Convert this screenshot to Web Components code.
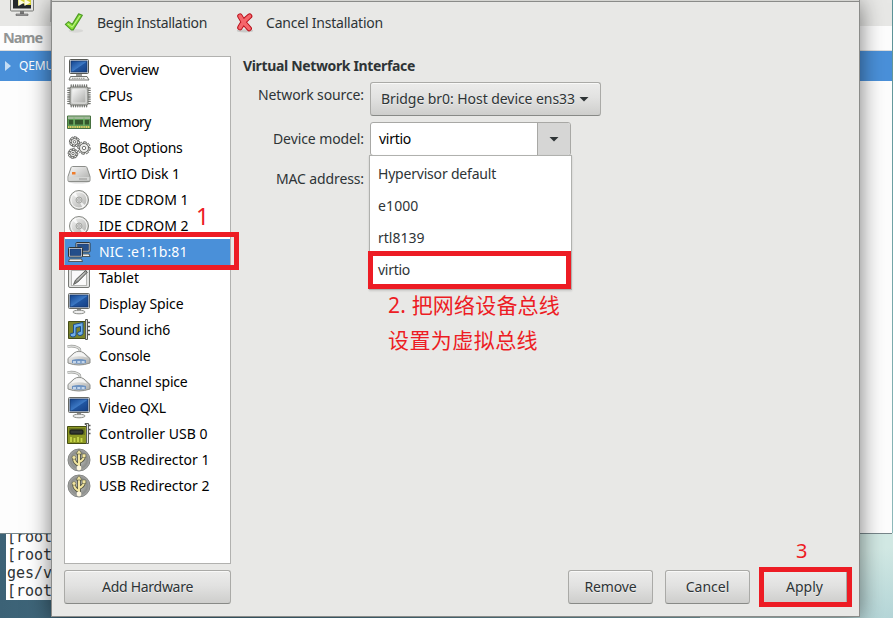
<!DOCTYPE html>
<html lang="en"><head><meta charset="utf-8"><title>Virtual Machine</title>
<style>html,body{margin:0;width:893px;height:618px;overflow:hidden;font:14px/20px "Noto Sans","Noto Sans CJK SC",sans-serif;color:#2e3436}</style></head><body>
<vm-desktop></vm-desktop>
<script>
const define=(name,html,after)=>customElements.define(name,class extends HTMLElement{
 constructor(){super();this.attachShadow({mode:'open'})}
 connectedCallback(){this.shadowRoot.innerHTML=typeof html==='function'?html(this):html;if(after)after(this)}
});
// One-line label tracked to an exact advance width.
define('ui-text',el=>`<style>:host{display:inline-block;white-space:pre;flex:none}span{display:inline-block}</style><span>${el.getAttribute('text')}</span>`,el=>{
 const w=+el.getAttribute('w'),s=el.shadowRoot.querySelector('span');
 if(w){const n=[...el.getAttribute('text')].length;const d=(w-s.getBoundingClientRect().width)/n;s.style.letterSpacing=d+'px';el.style.width=w+'px'}
});
const defs=`<defs>
<linearGradient id="b" x1="0" y1="0" x2="1" y2="1"><stop stop-color="#12438d"/><stop offset=".5" stop-color="#3c78c4"/><stop offset=".55" stop-color="#2055a0"/><stop offset="1" stop-color="#153f85"/></linearGradient>
<linearGradient id="g" x1="0" y1="0" x2="1" y2="1"><stop stop-color="#fafafa"/><stop offset="1" stop-color="#a9aaa7"/></linearGradient>
<radialGradient id="u"><stop stop-color="#c9cac8"/><stop offset=".75" stop-color="#8d8f8c"/><stop offset="1" stop-color="#aaa"/></radialGradient></defs>`;
const screen='<rect x="2.5" y="1.5" width="19" height="14" rx="1" fill="#e7e8e6" stroke="#555753"/><rect x="4" y="3" width="16" height="11" fill="url(#b)" stroke="#17396d" stroke-width=".8"/>';
const disc='<circle cx="12" cy="12" r="9.5" fill="url(#g)" stroke="#888a85"/><circle cx="12" cy="12" r="8" fill="none" stroke="#f5f5f4"/><path d="M12 12L5.5 6.5l3-2.4zM12 12l6.500 5.500-3 2.400z" fill="#fff" opacity=".75"/><circle cx="12" cy="12" r="3" fill="#d3d4d1" stroke="#a6a7a4"/><circle cx="12" cy="12" r="1.2" fill="#fff" stroke="#777" stroke-width=".6"/>';
const gear=(x,y,r)=>{let p='';for(let i=0;i<8;i++){p+=`<rect x="${x-1.3}" y="${y-r-1.7}" width="2.600" height="3" fill="#f3f3f2" stroke="#555753" stroke-width=".8" transform="rotate(${i*45+10} ${x} ${y})"/>`}return p+`<circle cx="${x}" cy="${y}" r="${r}" fill="#eeeeec" stroke="#555753" stroke-width=".8"/><circle cx="${x}" cy="${y}" r="${r*.38}" fill="#fff" stroke="#555753" stroke-width=".8"/>`};
let pins='';for(let i=0;i<8;i++){const p=3.9+i*2.2;pins+=`<path d="M${p+.3} .8v22M.8 ${p+.3}h22.400"/>`}
const pc='<rect x=".5" y=".5" width="14" height="9.500" rx=".8" fill="#e8e8e6" stroke="#2e3436"/><rect x="2" y="2" width="11" height="6.500" fill="#244e8a" stroke="#173566" stroke-width=".6"/><path d="M1.500 12h12l1 2.500H.5z" fill="#eeeeec" stroke="#3c3f3b" stroke-width=".8"/>';
const icons={
overview:screen+'<path d="M9 16h6v2H9z" fill="#999"/><path d="M3.500 18.500h16.500l2 3.500H2z" fill="#f2f2f1" stroke="#70726e"/><path d="M5 20.300h13" stroke="#8f918d" stroke-dasharray="1.500 .7"/>',
cpu:`<g stroke="#747672" stroke-width="1.300" stroke-linecap="round">${pins}</g><rect x="3" y="3" width="18" height="18" rx="1.500" fill="#c2c3c1" stroke="#73756f"/><rect x="5" y="5" width="14" height="14" rx="1" fill="url(#g)" stroke="#e3e4e2"/>`,
memory:'<path d="M.5 6h23v12.500H.5z" fill="#5c9b57" stroke="#47713f"/><path d="M1 6.500h22v2.500H1z" fill="#a3b99c"/><path d="M2 10h4.500v4.500H2zm6 0h8v4.500H8zm9.500 0h4.500v4.500h-4.500z" fill="#34562c"/><path d="M7 7.500v8m10-8v8" stroke="#79b86c"/><path d="M1 17h22" stroke="#dfcc62" stroke-width="2" stroke-dasharray="1.200 .6"/>',
boot:gear(7.5,5.800,3.300)+gear(17,12,4.500)+gear(6,17.500,3.100),
disk:'<ellipse cx="12" cy="19.500" rx="11" ry="2" fill="#0002"/><path d="M5.500 4.500h13q1 0 1.500 1.200l3 8.800v4q0 1-1 1H2q-1 0-1-1v-4l3-8.800q.5-1.200 1.500-1.200z" fill="url(#g)" stroke="#8c8e8a"/><path d="M1.500 15h21v3.500h-21z" fill="#d5d6d4"/><path d="M5 10h3.500v2.500H5z" fill="#ef7d2d"/><path d="M13 16v2m2-2v2m2-2v2m2-2v2" stroke="#858784" stroke-width=".8"/>',
disc,
nic:`<g transform="translate(8.500 2)">${pc}</g><g transform="translate(1 7)">${pc}</g>`,
tablet:'<rect x="1.500" y="2.500" width="21" height="19" rx="1.500" fill="#e2e3e1" stroke="#777975"/><rect x="4.500" y="4.500" width="15" height="15" fill="#fafafa" stroke="#b5b6b3"/><path d="M6.500 18.500l2-4.500L18.500 4.500l1.800 1.800-9.500 9.700z" fill="#8d8f8b" stroke="#555753" stroke-width=".9"/><path d="M10 14.500l8-8" stroke="#dfdfdc"/>',
display:'<path d="M10 15h4v4h-4z" fill="#888"/><ellipse cx="12" cy="20" rx="6" ry="1.800" fill="#eee" stroke="#8b8d89"/><rect x="1.500" y="1.500" width="21" height="15" rx="1" fill="#e4e5e3" stroke="#686a66"/><rect x="3" y="3" width="18" height="12" fill="url(#b)" stroke="#17396d" stroke-width=".8"/>',
sound:'<path d="M1.500 3.500h17v17h-17z" fill="#79822a" stroke="#454d18"/><path d="M18.500 1.500h2v20h-2z" fill="#d7d8d5" stroke="#555753"/><path d="M21 4.500h2m-2 4h2m-2 4h2m-2 4h2" stroke="#555" stroke-width="1.500"/><path d="M6.500 6.500l9.500-2v11q-.5 2-3 2t-2.500-2 3-2V8.500l-4.500 1V17q-.5 2-3 2T3 17t3.500-2z" fill="#70aee9" stroke="#1b4d8c"/>',
console:'<path d="M.5 2.500C8 1 15 4.500 12.500 7.500" fill="none" stroke="#999b97" stroke-width="2.600"/><path d="M.5 2.500C8 1 15 4.500 12.500 7.500" fill="none" stroke="#dedfdd" stroke-width="1.400"/><path d="M7 9q5-3.500 10 0l6 5.500v4.500q-11.500 4-22 0v-4.500z" fill="url(#g)" stroke="#8c8e8a"/><path d="M7.500 9.500q4.500-2.500 9 0l3.500 4q-8-2.500-16 0z" fill="#f4f4f3"/><path d="M5 16q7-2 14 0v3q-7 1.500-14 0z" fill="#6d93c2"/><path d="M6 18h12" stroke="#e0ebf7" stroke-width="1.300" stroke-dasharray="3 1.300"/>',
controller:'<path d="M.5 4.500h19v17H.5z" fill="#8d9824" stroke="#444d13"/><path d="M2 6h16v7H2z" fill="#6b7620"/><rect x="3" y="8" width="13" height="4" rx="1" fill="#343834" stroke="#171a16"/><path d="M4 20v-5m3.500 5v-4m3.500 4v-5m3.500 5v-4" stroke="#c8d84b" stroke-width="1.800"/><path d="M18 2.500v-1h3.500v20h-2v-19z" fill="#e6e7e4" stroke="#5b5d58"/><path d="M22 3.500h1.500m-1.500 4h1.500m-1.500 4h1.500" stroke="#555" stroke-width="1.500"/>',
usb:'<circle cx="12" cy="12" r="11" fill="url(#u)" stroke="#858784"/><g fill="none" stroke="#4f503e" stroke-width="3.600"><path d="M12 20V4M12 17q-5-2-5-7M12 14q5-2 5-6"/></g><g fill="none" stroke="#f3e6a0" stroke-width="2"><path d="M12 20V4M12 17q-5-2-5-7M12 14q5-2 5-6"/></g><path d="M12 1.500L9 6h6z" fill="#f3e6a0" stroke="#4f503e" stroke-width=".6"/><circle cx="7" cy="9.500" r="1.900" fill="#f3e6a0" stroke="#4f503e" stroke-width=".5"/><path d="M15.200 6h3.600v3.500h-3.600z" fill="#f3e6a0" stroke="#4f503e" stroke-width=".5"/><circle cx="12" cy="20" r="2.400" fill="#fff8e0"/>',
ok:'<ellipse cx="13" cy="20.500" rx="8" ry="2" fill="#0001"/><path d="M1.500 13.500L5 10.500l4 3L16 2l4 1.500L10 19.500H8z" fill="#8ae234" stroke="#4e9a28" stroke-width="1.300" stroke-linejoin="round"/><path d="M4 13l5 3.500L17.500 4" fill="none" stroke="#c4f39b"/>',
no:'<ellipse cx="12" cy="20.500" rx="9" ry="1.800" fill="#0002"/><path d="M6.500 4.500Q10 12 16.500 18M17 4.500Q10 10 6.500 17" fill="none" stroke="#b80d19" stroke-width="6" stroke-linecap="round"/><path d="M6.500 4.500Q10 12 16.500 18M17 4.500Q10 10 6.500 17" fill="none" stroke="#f5666b" stroke-width="3.900" stroke-linecap="round"/>',
vm:'<path d="M10 15h4v4h-4z" fill="#777"/><path d="M6 19h12v1.500H6z" fill="#aaa" stroke="#555" stroke-width=".6"/><rect x=".5" y="-3" width="23" height="19" rx="1" fill="#e6e6e4" stroke="#777975"/><path d="M3-3h18v16.500H3z" fill="#24282b"/><path d="M11-3h10v13h-6l-3-3-4 4V3z" fill="#d6d338"/><path d="M8.500 4l6 3.500-6 3.500zm6 0l6 3.500-6 3.500z" fill="#fffde4"/>'};
define('ui-icon',el=>`<style>:host{display:block;width:24px;height:24px;flex:none}svg{display:block;overflow:visible}</style><svg width="100%" height="100%" viewBox="0 0 24 24">${defs}${icons[el.getAttribute('name')]}</svg>`);
define('hw-row',el=>`<style>:host{display:flex;align-items:center;height:26px;padding-left:2px;gap:8px;color:#000}:host([selected]){background:#4a90d9;color:#fff}</style><ui-icon name="${el.getAttribute('icon')}"></ui-icon><ui-text text="${el.getAttribute('text')}" w="${el.getAttribute('w')}"></ui-text>`);
define('ui-button',`<style>:host{box-sizing:border-box;display:flex;height:34px;border:1px solid #aaaaa7;border-bottom-color:#888a87;border-radius:3px;background:linear-gradient(#ececeb,#e2e2e1 45%,#cececc);box-shadow:inset 0 1px #f9f9f8;align-items:center;justify-content:center;text-shadow:0 1px #fff8;flex:none}</style><slot></slot>`);
define('ui-arrow',`<style>:host{display:block;width:10px;height:5px;flex:none;background:#2e3436;clip-path:polygon(0 0,100% 0,50% 100%)}</style>`);
const rows=[['overview','Overview',60],['cpu','CPUs',33.5],['memory','Memory',52],['boot','Boot Options',83.5],['disk','VirtIO Disk 1',81],['disc','IDE CDROM 1',89.5],['disc','IDE CDROM 2',89.5],['nic','NIC :e1:1b:81',88.5],['tablet','Tablet',40],['display','Display Spice',84.5],['sound','Sound ich6',71],['console','Console',51.5],['console','Channel spice',88.5],['display','Video QXL',67],['controller','Controller USB 0',108.5],['usb','USB Redirector 1',110.5],['usb','USB Redirector 2',110.5]];
define('hw-list',`<style>:host{box-sizing:border-box;display:block;width:167px;height:508px;border:1px solid #b1b1af;background:#fff}</style>${rows.map(r=>`<hw-row icon="${r[0]}" text="${r[1]}" w="${r[2]}" ${r[0]==='nic'?'selected':''}></hw-row>`).join('')}`);
define('ui-combo',`<style>:host{position:relative;display:flex;width:201px;height:34px;box-sizing:border-box;border:1px solid #a8a8a5;border-radius:3px;background:#fff;color:#000}
.v{flex:1;display:flex;align-items:center;padding-left:8px}.a{width:32px;border-left:1px solid #a8a8a5;background:#d6d6d5;border-radius:0 2px 2px 0;display:flex;align-items:center;justify-content:center}
.m{position:absolute;left:-2px;top:32px;width:203px;height:135px;box-sizing:border-box;border:1px solid #b0b1ae;background:#fff;padding:2px 0 0 8px;color:#2e3436;box-shadow:0 1px 2px #0002}.m div{height:32px;display:flex;align-items:center}</style>
<div class="v"><ui-text text="virtio" w="32"></ui-text></div><div class="a"><ui-arrow></ui-arrow></div>
<div class="m"><div><ui-text text="Hypervisor default" w="118"></ui-text></div><div><ui-text text="e1000" w="40.5"></ui-text></div><div><ui-text text="rtl8139" w="46.5"></ui-text></div><div><ui-text text="virtio" w="32"></ui-text></div></div>`);
define('nic-form',`<style>:host{display:block;flex:1}.t{height:20px;font-weight:700}.r{display:flex;gap:6px}.l{width:121px;display:flex;justify-content:flex-end}</style>
<div class="t"><ui-text text="Virtual Network Interface" w="172"></ui-text></div>
<div class="r" style="height:40px;padding-top:6px"><div class="l" style="padding-top:3px"><ui-text text="Network source:" w="106"></ui-text></div><ui-button style="width:231px"><ui-text text="Bridge br0: Host device ens33" w="194"></ui-text><ui-arrow style="margin:0 1px 0 4px"></ui-arrow></ui-button></div>
<div class="r" style="height:40px"><div class="l" style="padding-top:7px"><ui-text text="Device model:" w="91"></ui-text></div><ui-combo></ui-combo></div>
<div class="r"><div class="l" style="padding-top:7px"><ui-text text="MAC address:" w="88"></ui-text></div></div>`);
define('vm-dialog',`<style>:host{box-sizing:border-box;display:flex;flex-direction:column;border:1px solid #8a8b89;border-top:0;background:#e8e8e6;box-shadow:0 3px 22px #0008}
.top{height:1px;background:#d5d5d2;border-bottom:1px solid #8a8b89}.tools{height:54px;box-sizing:border-box;display:flex;padding:10px 0 0 12px}.tools ui-icon{width:22px;height:22px}.body{display:flex;gap:12px;padding-left:12px;height:514px}.foot{display:flex;padding:0 12px;gap:12px}</style>
<div class="top"></div><div class="tools"><ui-icon name="ok"></ui-icon><ui-text text="Begin Installation" w="110" style="margin:1px 27px 0 11px"></ui-text><ui-icon name="no"></ui-icon><ui-text text="Cancel Installation" w="117" style="margin:1px 0 0 10px"></ui-text></div>
<div class="body"><hw-list></hw-list><nic-form></nic-form></div>
<div class="foot"><ui-button style="width:167px;margin-right:auto"><ui-text text="Add Hardware" w="91"></ui-text></ui-button><ui-button style="width:85px"><ui-text text="Remove" w="52"></ui-text></ui-button><ui-button style="width:85px"><ui-text text="Cancel" w="43.5"></ui-text></ui-button><ui-button style="width:85px"><ui-text text="Apply" w="37"></ui-text></ui-button></div>`);
define('manager-window',`<style>:host{display:flex;flex-direction:column;background:#fdfdfd;border-bottom:1px solid #77868a;overflow:hidden;box-sizing:border-box}
.bar{height:26px;flex:none;background:#e8e8e6;padding-left:10px;display:flex;align-items:flex-start}.bar ui-icon{margin-top:-5px}.head{height:24px;flex:none;padding-left:3px;display:flex;align-items:center;font-size:14.5px;font-weight:700;color:#929595;border-bottom:1px solid #ddd}.head ui-text{margin-top:-2px}.sel{height:30px;flex:none;background:#4a90d9;display:flex;align-items:center;gap:8px;padding-left:5px;color:#fff;font-size:12px}.sel i{width:6px;height:10px;background:#c3dcf4;clip-path:polygon(0 0,100% 50%,0 100%)}.bar i{width:1px;height:22px;margin-left:16px;background:#bbb}</style>
<div class="bar"><ui-icon name="vm"></ui-icon><i></i></div><div class="head"><ui-text text="Name" w="39"></ui-text></div><div class="sel"><i></i><ui-text text="QEMU" w="35"></ui-text></div>`);
define('term-window',`<style>:host{display:flex;flex-direction:column;overflow:hidden;background:#fff;box-sizing:border-box;padding-left:1px;font:15px/18px "DejaVu Sans Mono",monospace;color:#2e3436}div{height:18px;white-space:pre}</style><div><ui-text text="[root" w="45"></ui-text></div><div><ui-text text="[root" w="45"></ui-text></div><div><ui-text text="ges/v" w="45"></ui-text></div><div><ui-text text="[root" w="45"></ui-text></div>`);
define('red-frame',`<style>:host{position:absolute;box-sizing:border-box;border:5px solid #ed1c24}</style>`);
define('vm-desktop',`<style>:host{display:block;position:relative;width:893px;height:618px;overflow:hidden;background:linear-gradient(90deg,#3c6276,#527f90 40%,#9cc4c8 90%)}
.glow{position:absolute;left:700px;top:533px;width:193px;height:85px;background:linear-gradient(170deg,#d2e9e4 40%,#b5d6d8)}.edge{position:absolute;left:892px;top:0;width:1px;height:533px;background:linear-gradient(#5b9296,#8fbabb)}
manager-window,term-window,vm-dialog,.n{position:absolute}.n{color:#ed1c24;font-size:22px;line-height:35px;white-space:pre}</style>
<div class="glow"></div><div class="edge"></div>
<term-window style="left:6px;top:528px;width:60px;height:72px"></term-window>
<manager-window style="left:0;top:0;width:892px;height:534px"></manager-window>
<vm-dialog style="left:51px;top:0;width:809px;height:617px"></vm-dialog>
<red-frame style="left:59px;top:232px;width:180px;height:38px"></red-frame><red-frame style="left:368px;top:251px;width:203px;height:38px"></red-frame><red-frame style="left:759px;top:567px;width:93px;height:40px"></red-frame>
<div class="n" style="left:196px;top:199px;font-size:23px">1</div><div class="n" style="left:796px;top:533px;font-size:20px">3</div>
<div class="n" style="left:388px;top:288px;font-size:21px"><ui-text text="2. 把网络设备总线" w="172"></ui-text><br><ui-text text="设置为虚拟总线" w="150"></ui-text></div>`);
</script></body></html>
